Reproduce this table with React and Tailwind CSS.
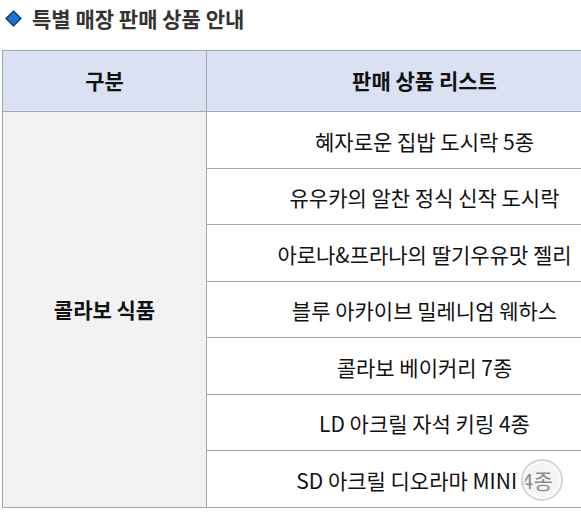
import React from "react";

const items = [
  "혜자로운 집밥 도시락 5종",
  "유우카의 알찬 정식 신작 도시락",
  "아로나&프라나의 딸기우유맛 젤리",
  "블루 아카이브 밀레니엄 웨하스",
  "콜라보 베이커리 7종",
  "LD 아크릴 자석 키링 4종",
  "SD 아크릴 디오라마 MINI 4종",
];

const App = () => {
  return (
    <div className="relative w-[581px] h-[517px] overflow-hidden bg-white font-['Noto_Sans_CJK_KR',sans-serif]">
      {/* Title */}
      <div className="flex items-center h-[36px] pl-[5px] pt-[1px]">
        <svg width="17" height="17" viewBox="0 0 17 17">
          <path d="M8.5 1 L16 8.5 L8.5 16 L1 8.5 Z" fill="#1a73d9" stroke="#0d2f63" strokeWidth="1.2" />
        </svg>
        <span className="ml-[10px] text-[21px] font-bold text-[#333] leading-none">
          특별 매장 판매 상품 안내
        </span>
      </div>

      {/* Table */}
      <div className="mt-[14px] ml-[2px] w-[640px] border-t border-l border-b border-[#a6a6a6] text-[#111]">
        <div className="flex h-[61px] border-b border-[#a6a6a6] bg-[#d9e1f2]">
          <div className="w-[204px] border-r border-[#a6a6a6] flex items-center justify-center text-[21px] font-bold">
            구분
          </div>
          <div className="flex-1 flex items-center justify-center text-[21px] font-bold">
            판매 상품 리스트
          </div>
        </div>
        <div className="flex h-[395px]">
          <div className="w-[204px] border-r border-[#a6a6a6] bg-[#f2f2f2] flex items-center justify-center text-[21px] font-bold">
            콜라보 식품
          </div>
          <div className="flex-1 flex flex-col">
            {items.map((item, i) => (
              <div
                key={i}
                className={
                  "flex-1 flex items-center justify-center text-[21px] pt-[3px] " +
                  (i < items.length - 1 ? "border-b border-[#a6a6a6]" : "")
                }
              >
                {item}
              </div>
            ))}
          </div>
        </div>
      </div>

      {/* watermark */}
      <div className="absolute left-[521px] top-[459px] w-[42px] h-[42px] rounded-full border-2 border-[#d6d6d6] bg-[rgba(235,235,235,0.55)] shadow-[inset_0_0_0_2px_rgba(255,255,255,0.8)]" />
    </div>
  );
};

export default App;
